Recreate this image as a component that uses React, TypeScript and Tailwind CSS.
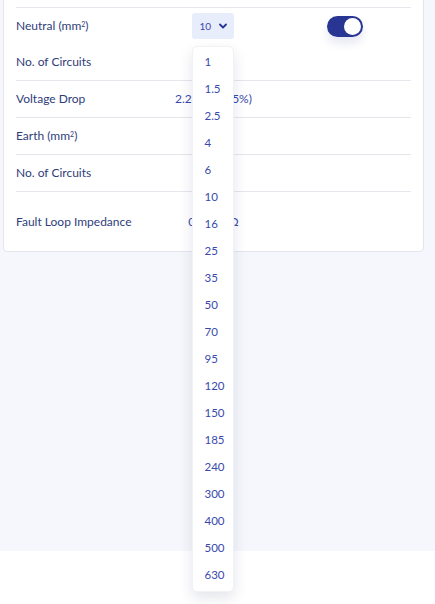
import { useState } from 'react'

const sizes = ['1', '1.5', '2.5', '4', '6', '10', '16', '25', '35', '50', '70', '95', '120', '150', '185', '240', '300', '400', '500', '630']

const Toggle = ({ on }: { on: boolean }) => (
  <div className={`w-[36px] h-[21px] rounded-full flex items-center px-[2px] shadow-[0_6px_10px_rgba(40,53,147,0.12)] ${on ? 'bg-[#283593] justify-end' : 'bg-gray-300 justify-start'}`}>
    <div className="w-[17px] h-[17px] rounded-full bg-white" />
  </div>
)

const SizeSelect = ({ value, open }: { value: string; open: boolean }) => (
  <div className="relative">
    <div className="w-[42px] h-[26px] rounded-[3px] bg-[#e8edfc] flex items-center pl-[7px] pr-[7px] justify-between">
      <span className="text-[10px] text-[#3949ab]">{value}</span>
      <svg width="8" height="6" viewBox="0 0 8 6" fill="none">
        <path d="M1 1.5 L4 4.5 L7 1.5" stroke="#283593" strokeWidth="1.8" strokeLinecap="round" strokeLinejoin="round" />
      </svg>
    </div>
    {open && (
      <ul className="absolute left-0 top-[33px] w-[42px] z-10 bg-white rounded-[5px] border border-[#f1f2f6] shadow-[0_6px_14px_rgba(30,40,90,0.12)] pt-[1px] pb-[3px]">
        {sizes.map((s) => (
          <li key={s} className="h-[27px] flex items-center pl-[11px] text-[11.5px] text-[#3949ab]">
            {s}
          </li>
        ))}
      </ul>
    )}
  </div>
)

const Row = ({ label, children, right, className = '' }: { label: React.ReactNode; children?: React.ReactNode; right?: React.ReactNode; className?: string }) => (
  <div className={`grid grid-cols-3 items-center ${className}`}>
    <div className="text-[12px] text-[#2f3d7a]">{label}</div>
    <div className="flex justify-center text-[12px] text-[#3949ab]">{children}</div>
    <div className="flex justify-center">{right}</div>
  </div>
)

function App() {
  const [open] = useState(true)
  return (
    <div className="min-h-[604px] bg-white" style={{ fontFamily: 'Lato, "Open Sans", sans-serif' }}>
      <div className="h-[551px] bg-[#f6f7fc] pl-[3px] pr-[11px] flex flex-col">
        <div className="-mt-[8px] bg-white border border-[#e4e6ee] rounded-[4px] px-[12px] pt-[14px]">
          <div className="border-t border-[#e6e7ec]">
            <Row label={<>Neutral (mm<sup className="text-[7px]">2</sup>)</>} right={<Toggle on />} className="h-[36px]">
              <SizeSelect value="10" open={open} />
            </Row>
            <Row label="No. of Circuits" className="h-[36px]" />
          </div>
          <Row label="Voltage Drop" className="h-[37px] border-t border-[#e6e7ec]">
            <span>2.24 V (0.95%)</span>
          </Row>
          <Row label={<>Earth (mm<sup className="text-[7px]">2</sup>)</>} className="h-[37px] border-t border-[#e6e7ec]" />
          <Row label="No. of Circuits" className="h-[37px] border-t border-[#e6e7ec]" />
          <Row label="Fault Loop Impedance" className="h-[60px] border-t border-[#e6e7ec]">
            <span>0.4856 Ω</span>
          </Row>
        </div>
      </div>
    </div>
  )
}

export default App
